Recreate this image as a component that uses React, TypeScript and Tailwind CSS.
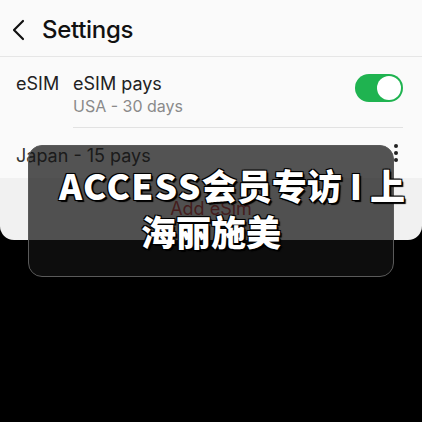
import React from "react";

const App: React.FC = () => {
    return (
        <div className="relative w-[422px] h-[422px] overflow-hidden bg-black font-['Inter','Roboto',sans-serif]">
            {/* Settings card */}
            <div className="h-[240px] rounded-b-[14px] overflow-hidden bg-[#f1f1f1] flex flex-col">
                <div className="bg-[#fafafa]">
                    {/* Header */}
                    <div className="h-[57px] flex items-center pl-[12px] pt-[3px] border-b border-[#e6e6e6]">
                        <svg width="14" height="22" viewBox="0 0 14 22" className="text-[#111]">
                            <polyline points="11,2 2,11 11,20" fill="none" stroke="currentColor" strokeWidth="2.2" strokeLinecap="round" strokeLinejoin="round" />
                        </svg>
                        <span className="ml-[16px] text-[24px] font-medium text-[#111] tracking-[-0.3px]">Settings</span>
                    </div>

                    {/* eSIM row */}
                    <div className="flex pl-[16px] pr-[19px] pt-[16px]">
                        <span className="w-[57px] text-[18px] text-[#222] leading-[22px]">eSIM</span>
                        <div className="flex-1 flex flex-col border-b border-[#e2e2e2] pb-[11px]">
                            <div className="flex items-start justify-between">
                                <div className="flex flex-col">
                                    <span className="text-[18px] text-[#222] leading-[22px]">eSIM pays</span>
                                    <span className="text-[16px] text-[#8a8a8a] leading-[20px] mt-[1px]">USA - 30 days</span>
                                </div>
                                <div className="mt-[1px] w-[48px] h-[28px] rounded-full bg-[#1fb350] flex items-center justify-end pr-[2px]">
                                    <div className="w-[24px] h-[24px] rounded-full bg-white" />
                                </div>
                            </div>
                        </div>
                    </div>

                    {/* Japan row */}
                    <div className="h-[50px] flex items-center justify-between pl-[16px] pr-[24px] pt-[4px]">
                        <span className="text-[18px] text-[#333]">Japan - 15 pays</span>
                        <div className="flex flex-col gap-[3px] items-center -mt-[4px]">
                            <div className="w-[4px] h-[4px] rounded-full bg-[#222]" />
                            <div className="w-[4px] h-[4px] rounded-full bg-[#222]" />
                            <div className="w-[4px] h-[4px] rounded-full bg-[#222]" />
                        </div>
                    </div>
                </div>

                {/* Add eSim */}
                <div className="flex-1 flex items-center justify-center pb-[2px]">
                    <span className="text-[18px] text-[#c43a3a]">Add eSim</span>
                </div>
            </div>

            {/* Subtitle panel overlay */}
            <div className="absolute left-[28px] top-[145px] w-[366px] h-[132px] rounded-[14px] bg-[rgba(18,18,18,0.72)] border border-[#5a5a5a]" />

            {/* Subtitle text */}
            <div className="absolute left-[40px] top-[162px] w-[384px] flex flex-col items-center font-['Noto_Sans_CJK_SC','Noto_Sans',sans-serif] font-black text-white text-[35px] leading-[46px] [text-shadow:0_0_2px_#000,1px_1px_0_#000,2px_2px_1px_#000,-1px_-1px_0_#000,1px_-1px_0_#000,-1px_1px_0_#000]">
                <div className="whitespace-nowrap">
                    <span className="tracking-[1.5px]">ACCESS</span>会员专访 I 上
                </div>
                <div className="whitespace-nowrap mr-[42px]">海丽施美</div>
            </div>
        </div>
    );
};

export default App;
